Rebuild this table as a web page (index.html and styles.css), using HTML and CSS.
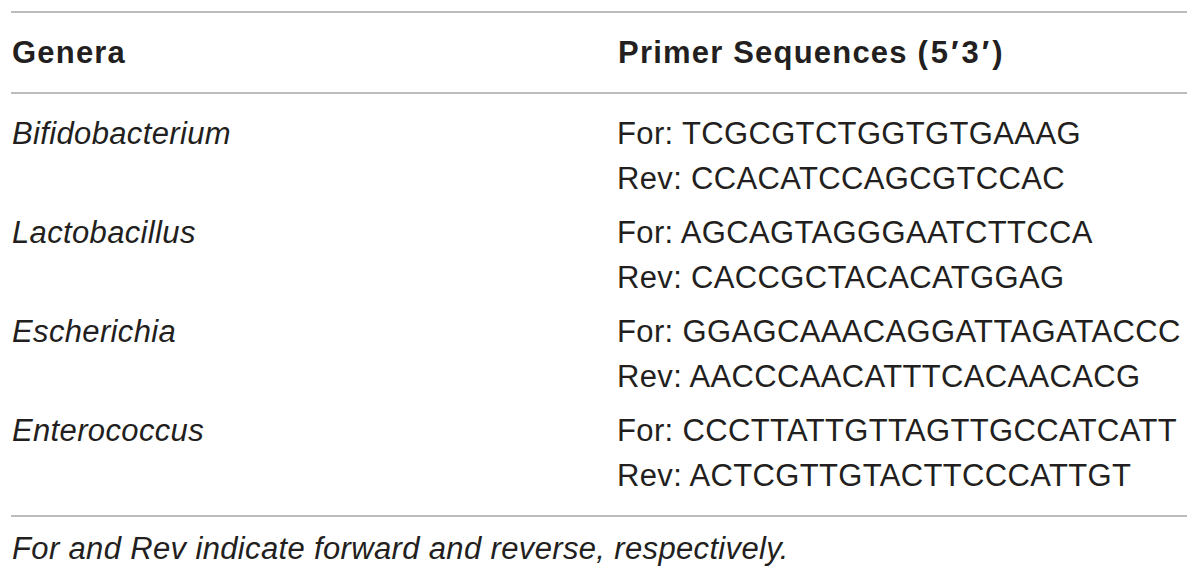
FILE: index.html
```html
<!DOCTYPE html>
<html>
<head>
<meta charset="utf-8">
<link rel="stylesheet" href="styles.css">
</head>
<body>
<div class="wrap">
  <table class="primers">
    <thead>
      <tr><th class="c1">Genera</th><th class="c2">Primer Sequences <span class="ends">(5′3′)</span></th></tr>
    </thead>
    <tbody>
      <tr><td class="c1"><i>Bifidobacterium</i></td><td class="c2">For: TCGCGTCTGGTGTGAAAG<br>Rev: CCACATCCAGCGTCCAC</td></tr>
      <tr><td class="c1"><i>Lactobacillus</i></td><td class="c2">For: AGCAGTAGGGAATCTTCCA<br>Rev: CACCGCTACACATGGAG</td></tr>
      <tr><td class="c1"><i>Escherichia</i></td><td class="c2">For: GGAGCAAACAGGATTAGATACCC<br>Rev: AACCCAACATTTCACAACACG</td></tr>
      <tr><td class="c1"><i>Enterococcus</i></td><td class="c2">For: CCCTTATTGTTAGTTGCCATCATT<br>Rev: ACTCGTTGTACTTCCCATTGT</td></tr>
    </tbody>
  </table>
  <p class="note"><i>For and Rev indicate forward and reverse, respectively.</i></p>
</div>
</body>
</html>
```
FILE: styles.css
```css
html, body { margin: 0; padding: 0; background: #fff; }
body {
  font-family: "Liberation Sans", Arial, sans-serif;
  color: #231f20;
  font-size: 31px;
  letter-spacing: 0.35px;
}
.wrap { padding: 11px 13px 0 11px; }
.primers {
  width: 1176px;
  border-collapse: collapse;
  border-top: 2px solid #bdbdbd;
  border-bottom: 2px solid #bdbdbd;
}
.primers th {
  text-align: left;
  font-weight: bold;
  letter-spacing: 1.2px;
  line-height: 45px;
  padding: 17px 0 17px 1px;
  border-bottom: 2px solid #bdbdbd;
}
.ends { letter-spacing: 3px; }
.primers td {
  vertical-align: top;
  line-height: 45px;
  padding: 9px 0 0 0;
}
.primers td.c1 { padding-left: 1px; }
.primers td.c2 { padding-left: 0; }
.primers tbody tr:first-child td { padding-top: 17px; }
.primers tbody tr:last-child td { padding-bottom: 17px; }
.c1 { width: 605px; }
.note {
  margin: 0;
  padding: 9px 0 0 1px;
  line-height: 45px;
}
```
